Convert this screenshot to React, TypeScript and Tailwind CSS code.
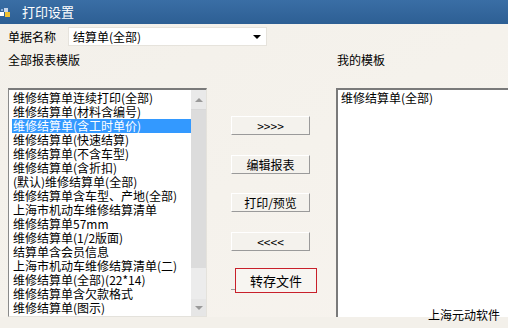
import React from 'react'

const templates = [
  '维修结算单连续打印(全部)',
  '维修结算单(材料含编号)',
  '维修结算单(含工时单价)',
  '维修结算单(快速结算)',
  '维修结算单(不含车型)',
  '维修结算单(含折扣)',
  '(默认)维修结算单(全部)',
  '维修结算单含车型、产地(全部)',
  '上海市机动车维修结算清单',
  '维修结算单57mm',
  '维修结算单(1/2版面)',
  '结算单含会员信息',
  '上海市机动车维修结算清单(二)',
  '维修结算单(全部)(22*14)',
  '维修结算单含欠款格式',
  '维修结算单(图示)',
]

const selectedIndex = 2

function WinButton({ label, className = '' }: { label: string; className?: string }) {
  return (
    <button
      className={
        'relative flex h-[19px] w-[79px] shrink-0 items-center justify-center border-t border-l border-t-white border-l-white border-r border-b border-r-[#9a9a9a] border-b-[#9a9a9a] bg-[#f4f2ed] text-[12px] leading-none text-black ' +
        className
      }
    >
      {label}
    </button>
  )
}

function AppIcon() {
  return (
    <svg width="11" height="11" viewBox="0 0 11 11" className="shrink-0">
      <rect x="0" y="5" width="4" height="4" fill="#ffffff" />
      <rect x="4" y="1" width="4" height="4" fill="#c9d7ea" />
      <rect x="5" y="5" width="5" height="5" fill="#f1c232" />
      <rect x="1" y="2" width="2" height="2" fill="#8fb0d8" />
    </svg>
  )
}

export default function App() {
  return (
    <div
      className="relative h-[328px] w-[508px] overflow-hidden bg-[#f3f0ea] text-[12px] text-black"
      style={{ fontFamily: '"Noto Sans CJK SC", "Liberation Sans", sans-serif' }}
    >
      {/* title bar */}
      <div className="flex h-[24px] items-center gap-[11px] bg-gradient-to-b from-[#3a6ea5] to-[#2d5f94]">
        <AppIcon />
        <span className="text-[13px] text-white">打印设置</span>
      </div>

      <div className="bg-gradient-to-br from-[#f3f0ea] via-[#f5f2ec] to-[#f7f3ee] pl-[8px] pt-[3px]">
        {/* report name row */}
        <div className="flex h-[19px] items-center">
          <span className="w-[60px] shrink-0">单据名称</span>
          <div className="flex h-[19px] w-[199px] shrink-0 items-center justify-between border border-[#e6e3dc] bg-white pl-[4px] pr-[5px]">
            <span>结算单(全部)</span>
            <span className="h-0 w-0 border-x-[4px] border-t-[4px] border-x-transparent border-t-black" />
          </div>
        </div>

        {/* section labels */}
        <div className="mt-[6px] flex h-[16px] items-center">
          <span className="w-[329px] shrink-0">全部报表模版</span>
          <span>我的模板</span>
        </div>

        {/* main row */}
        <div className="mt-[20px] flex">
          {/* left list */}
          <div className="flex h-[229px] w-[199px] shrink-0 border-t-2 border-l border-t-[#7a7a7a] border-l-[#8a8a8a] border-r border-b border-r-[#e4e2dc] border-b-[#e4e2dc] bg-white">
            <div className="flex flex-1 flex-col pl-[3px] pt-[1px]">
              {templates.map((t, i) => (
                <div
                  key={t}
                  className={
                    'h-[14px] whitespace-nowrap pl-[1px] leading-[14px] ' +
                    (i === selectedIndex ? 'bg-[#3399ff] text-white' : '')
                  }
                >
                  {t}
                </div>
              ))}
            </div>
            <div className="flex w-[15px] shrink-0 flex-col bg-[#ebebeb]">
              <div className="flex h-[20px] items-center justify-center border-b border-[#d8d8d8] bg-[#e9e9e9]">
                <span className="h-0 w-0 border-x-[4px] border-b-[4px] border-x-transparent border-b-[#9a9a9a]" />
              </div>
              <div className="h-[158px] bg-[#dcdcdc]" />
              <div className="flex-1 bg-[#ececec]" />
              <div className="flex h-[17px] items-center justify-center bg-[#e6e6e6]">
                <span className="h-0 w-0 border-x-[4px] border-t-[4px] border-x-transparent border-t-[#9a9a9a]" />
              </div>
            </div>
          </div>

          {/* buttons */}
          <div className="ml-[24px] flex w-[105px] shrink-0 flex-col pt-[28px]">
            <WinButton label=">>>>" />
            <WinButton label="编辑报表" className="mt-[20px]" />
            <WinButton label="打印/预览" className="mt-[19px]" />
            <WinButton label="<<<<" className="mt-[20px]" />
            <button className="relative mt-[20px] h-[19px] w-[79px] shrink-0 border-r border-b border-r-[#9a9a9a] border-b-[#9a9a9a] bg-[#f4f2ed]">
              <span className="absolute top-[-3px] left-[4px] flex h-[25px] w-[82px] items-center justify-center border border-[#c8202a] bg-[#f7f5f1] text-[13px]">
                转存文件
              </span>
            </button>
          </div>

          {/* right list */}
          <div className="h-[229px] w-[190px] shrink-0 border-t-2 border-l-2 border-t-[#7a7a7a] border-l-[#7a7a7a] bg-white pl-[3px] pt-[1px]">
            <div className="h-[14px] leading-[14px]">维修结算单(全部)</div>
          </div>
        </div>
      </div>

      <span className="absolute top-[308px] left-[428px] text-[12px] leading-[14px]">上海元动软件</span>
    </div>
  )
}
